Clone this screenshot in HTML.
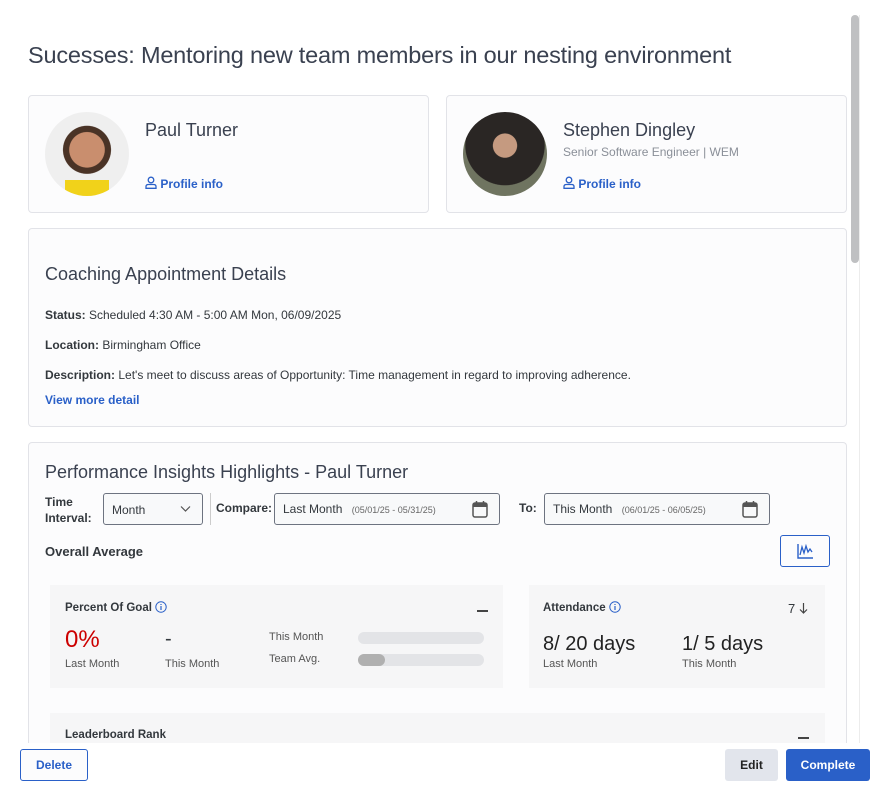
<!DOCTYPE html><html><head><style>
*{box-sizing:border-box;margin:0;padding:0}
body{width:885px;height:797px;overflow:hidden;background:#fff;font-family:"Liberation Sans",sans-serif;color:#33383d;position:relative}
.a{position:absolute}
.card{position:absolute;background:#fcfcfd;border:1px solid #e2e3e8;border-radius:4px}
.lbl{font-size:12px;color:#33383d}
.b{font-weight:bold}
.link{color:#2a60c8;font-weight:bold;font-size:12px}
.tile{position:absolute;background:#f6f6f7}
.inp{position:absolute;border:1px solid #6d7380;border-radius:3px;background:#f8f9fa;height:32px;font-size:12px}
.small{font-size:11px;color:#555}
.cal{position:absolute}
</style></head><body>
<div class="a" style="left:28px;top:42px;font-size:23.5px;color:#3a4150;letter-spacing:-0.2px">Sucesses: Mentoring new team members in our nesting environment</div>
<div class="a" style="left:851px;top:15px;width:8px;height:248px;background:#bfc0c2;border-radius:4px"></div>
<div class="a" style="left:859px;top:15px;width:1px;height:728px;background:#ececec"></div>

<div class="card" style="left:28px;top:95px;width:401px;height:118px">
<div class="a" style="left:16px;top:16px;width:84px;height:84px;border-radius:50%;background:radial-gradient(circle at 50% 45%,#c98e6e 0 28%,#4a3326 29% 38%,#efefef 39%);overflow:hidden"><div class="a" style="left:20px;top:68px;width:44px;height:20px;background:#f1d21a"></div></div>
<div class="a" style="left:116px;top:24px;font-size:18px;color:#3a4150">Paul Turner</div>
<div class="a link" style="left:116px;top:80px"><svg width="12" height="13" viewBox="0 0 12 13" style="vertical-align:-1px"><circle cx="6" cy="4" r="2.8" fill="none" stroke="#2a60c8" stroke-width="1.3"/><path d="M1 12.3V10.5Q1 8.5 3.5 8.5H8.5Q11 8.5 11 10.5V12.3Z" fill="none" stroke="#2a60c8" stroke-width="1.3"/></svg> Profile info</div>
</div>
<div class="card" style="left:446px;top:95px;width:401px;height:118px">
<div class="a" style="left:16px;top:16px;width:84px;height:84px;border-radius:50%;background:radial-gradient(circle at 50% 40%,#c59a80 0 18%,#2a2624 19% 60%,#6f7460 61%)"></div>
<div class="a" style="left:116px;top:24px;font-size:18px;color:#3a4150">Stephen Dingley</div>
<div class="a" style="left:116px;top:49px;font-size:12px;color:#8a8f98">Senior Software Engineer | WEM</div>
<div class="a link" style="left:116px;top:80px"><svg width="12" height="13" viewBox="0 0 12 13" style="vertical-align:-1px"><circle cx="6" cy="4" r="2.8" fill="none" stroke="#2a60c8" stroke-width="1.3"/><path d="M1 12.3V10.5Q1 8.5 3.5 8.5H8.5Q11 8.5 11 10.5V12.3Z" fill="none" stroke="#2a60c8" stroke-width="1.3"/></svg> Profile info</div>
</div>

<div class="card" style="left:28px;top:228px;width:819px;height:199px">
<div class="a" style="left:16px;top:35px;font-size:18px;color:#3a4150">Coaching Appointment Details</div>
<div class="a lbl" style="left:16px;top:79px"><b>Status:</b> Scheduled 4:30 AM - 5:00 AM Mon, 06/09/2025</div>
<div class="a lbl" style="left:16px;top:109px"><b>Location:</b> Birmingham Office</div>
<div class="a lbl" style="left:16px;top:139px"><b>Description:</b> Let's meet to discuss areas of Opportunity: Time management in regard to improving adherence.</div>
<div class="a link" style="left:16px;top:164px">View more detail</div>
</div>

<div class="card" style="left:28px;top:442px;width:819px;height:320px;border-bottom:none">
<div class="a" style="left:16px;top:19px;font-size:18px;color:#3a4150">Performance Insights Highlights - Paul Turner</div>
<div class="a lbl b" style="left:16px;top:51px;line-height:16px">Time<br>Interval:</div>
<div class="inp" style="left:74px;top:50px;width:100px;padding:9px 8px">Month<svg class="a" style="left:76px;top:11px" width="11" height="8" viewBox="0 0 11 8"><path d="M1 1.5L5.5 6 10 1.5" fill="none" stroke="#555" stroke-width="1.2"/></svg></div>
<div class="a" style="left:181px;top:50px;width:1px;height:32px;background:#ccc"></div>
<div class="a lbl b" style="left:187px;top:58px">Compare:</div>
<div class="inp" style="left:245px;top:50px;width:226px;padding:8px 8px">Last Month <span style="font-size:9px;color:#666;margin-left:6px">(05/01/25 - 05/31/25)</span></div>
<div class="a lbl b" style="left:490px;top:58px">To:</div>
<div class="inp" style="left:515px;top:50px;width:226px;padding:8px 8px">This Month <span style="font-size:9px;color:#666;margin-left:6px">(06/01/25 - 06/05/25)</span></div>
<svg class="cal" style="left:443px;top:57px" width="16" height="18" viewBox="0 0 16 18"><rect x="1" y="3" width="14" height="14" rx="2" fill="none" stroke="#555" stroke-width="1.5"/><rect x="1" y="3" width="14" height="4" fill="#555"/><path d="M4.5 1V4M11.5 1V4" stroke="#555" stroke-width="1.5"/></svg>
<svg class="cal" style="left:713px;top:57px" width="16" height="18" viewBox="0 0 16 18"><rect x="1" y="3" width="14" height="14" rx="2" fill="none" stroke="#555" stroke-width="1.5"/><rect x="1" y="3" width="14" height="4" fill="#555"/><path d="M4.5 1V4M11.5 1V4" stroke="#555" stroke-width="1.5"/></svg>
<div class="a b" style="left:16px;top:101px;font-size:13px">Overall Average</div>
<div class="a" style="left:751px;top:92px;width:50px;height:32px;border:1px solid #2a60c8;border-radius:3px"><svg class="a" style="left:16px;top:7px" width="17" height="16" viewBox="0 0 17 16"><path d="M1 1V15H16" fill="none" stroke="#2a60c8" stroke-width="1.4"/><path d="M3 12L5 4 7 10 9 3 11 9 13 6 15 9" fill="none" stroke="#2a60c8" stroke-width="1.3"/></svg></div>
</div>
<div class="tile" style="left:50px;top:585px;width:453px;height:103px">
<div class="a b" style="left:15px;top:16px;font-size:11.5px">Percent Of Goal <svg width="12" height="12" viewBox="0 0 12 12" style="vertical-align:-2px"><circle cx="6" cy="6" r="5.2" fill="none" stroke="#2a60c8" stroke-width="1"/><path d="M6 5V9M6 3V4" stroke="#2a60c8" stroke-width="1.2"/></svg></div>
<div class="a" style="left:427px;top:25px;width:11px;height:2px;background:#444"></div>
<div class="a" style="left:15px;top:41px;font-size:24px;color:#c00">0%</div>
<div class="a small" style="left:15px;top:73px">Last Month</div>
<div class="a" style="left:115px;top:43px;font-size:20px">-</div>
<div class="a small" style="left:115px;top:73px">This Month</div>
<div class="a small" style="left:219px;top:46px">This Month</div>
<div class="a small" style="left:219px;top:68px">Team Avg.</div>
<div class="a" style="left:308px;top:47px;width:126px;height:12px;background:#e3e4e7;border-radius:6px"></div>
<div class="a" style="left:308px;top:69px;width:126px;height:12px;background:#e3e4e7;border-radius:6px"><div style="width:27px;height:12px;background:#b0b0b0;border-radius:6px"></div></div>
</div>
<div class="tile" style="left:529px;top:585px;width:296px;height:103px">
<div class="a b" style="left:14px;top:16px;font-size:11.5px">Attendance <svg width="12" height="12" viewBox="0 0 12 12" style="vertical-align:-2px"><circle cx="6" cy="6" r="5.2" fill="none" stroke="#2a60c8" stroke-width="1"/><path d="M6 5V9M6 3V4" stroke="#2a60c8" stroke-width="1.2"/></svg></div>
<div class="a" style="left:259px;top:16px;font-size:13px">7 <svg width="9" height="12" viewBox="0 0 9 12" style="vertical-align:-1px"><path d="M4.5 1V11M1 7.5L4.5 11 8 7.5" fill="none" stroke="#444" stroke-width="1.2"/></svg></div>
<div class="a" style="left:14px;top:48px;font-size:20px;color:#222">8/ 20 days</div>
<div class="a small" style="left:14px;top:73px">Last Month</div>
<div class="a" style="left:153px;top:48px;font-size:20px;color:#222">1/ 5 days</div>
<div class="a small" style="left:153px;top:73px">This Month</div>
</div>
<div class="tile" style="left:50px;top:713px;width:775px;height:40px">
<div class="a b" style="left:15px;top:16px;font-size:11.5px">Leaderboard Rank</div>
<div class="a" style="left:748px;top:24px;width:11px;height:2px;background:#444"></div>
</div>
<div class="a" style="left:0;top:743px;width:885px;height:54px;background:#fff"></div>
<div class="a link" style="left:20px;top:749px;width:68px;height:32px;border:1px solid #2a60c8;border-radius:3px;text-align:center;line-height:30px;background:#fcfcfd">Delete</div>
<div class="a b" style="left:725px;top:749px;width:53px;height:32px;border-radius:3px;text-align:center;line-height:32px;background:#e2e5ec;font-size:12px;color:#222">Edit</div>
<div class="a b" style="left:786px;top:749px;width:84px;height:32px;border-radius:3px;text-align:center;line-height:32px;background:#2a60c8;font-size:12px;color:#fff">Complete</div>
</body></html>
